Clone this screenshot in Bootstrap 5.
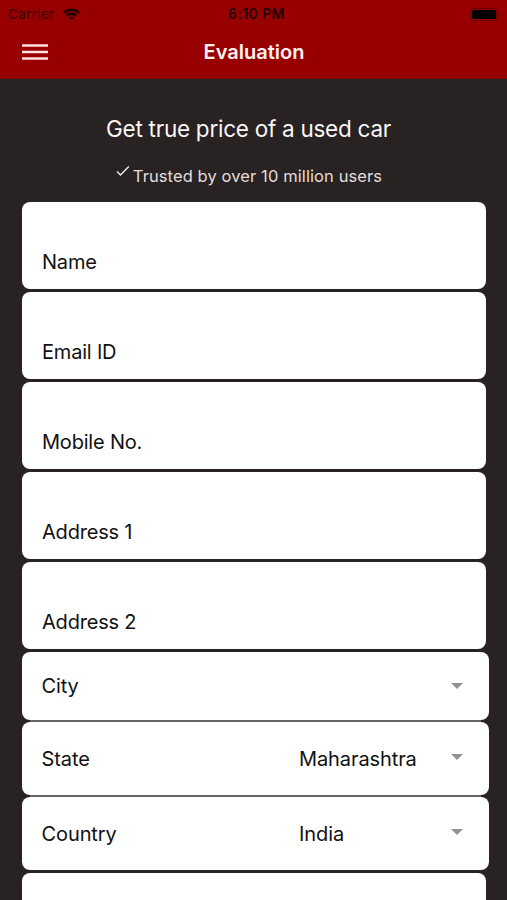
<!DOCTYPE html>
<html lang="en">
<head>
<meta charset="utf-8">
<meta name="viewport" content="width=device-width, initial-scale=1">
<title>Evaluation</title>
<link href="https://cdn.jsdelivr.net/npm/bootstrap@5.3.0/dist/css/bootstrap.min.css" rel="stylesheet">
<style>
  body { background: #282222; font-family: Inter, Roboto, sans-serif; color: #111; height: 900px; overflow: hidden; }
  .top-area { background: #980000; height: 79px; border-bottom: 1px solid #7a0706; }
  .status-line { height: 27px; padding: 0 7px 0 8px; font-size: 13.5px; line-height: 28px; color: #380000; }
  .carrier { letter-spacing: .35px; }
  .status-time { font-weight: 600; color: #250000; font-size: 14px; letter-spacing: .4px; padding-left: 5px; }
  .title-line { height: 50px; padding: 0 22px; }
  .screen-title { font-size: 20px; font-weight: 600; line-height: 50px; color: #fff0f0; padding-left: 1px; }
  .headline { font-size: 22.5px; line-height: 30px; color: #faf6f6; letter-spacing: -.26px; margin-top: 35px; padding-right: 10px; }
  .trust-line { font-size: 16.5px; line-height: 24px; color: #e2dedd; margin-top: 20px; padding-right: 9px; letter-spacing: .1px; }
  .check { margin-right: 3px; margin-top: 1px; }
  .form-area { padding: 0 18px 0 22px; margin-top: 14px; font-size: 20px; line-height: 28px; letter-spacing: -.2px; }
  .field { background: #fff; border-radius: 8px; padding-left: 20px; }
  .field-text { height: 86.5px; width: 464px; margin-bottom: 3.5px; padding-bottom: 12.5px; }
  .field-cut { height: 27px; width: 464px; border-radius: 8px 8px 0 0; margin-top: 3px; }
  .field-pick { width: 467px; padding-right: 26px; }
  .field-pick { padding-left: 19.5px; letter-spacing: -.1px; }
  .pick-city { height: 68px; }
  .pick-tall { height: 73px; }
  .seam { height: 2px; margin: 0 8px; width: 451px; background: #686565; }
  .pick-value { width: 152px; }
  .arrow { width: 0; border: 6px solid transparent; border-top-color: #929292; border-bottom: 0; }
</style>
<script src="https://cdn.jsdelivr.net/npm/bootstrap@5.3.0/dist/js/bootstrap.bundle.min.js"></script>
</head>
<body>
<header class="top-area">
  <div class="status-line row g-0">
    <div class="col d-flex align-items-center gap-2">
      <span class="carrier">Carrier</span>
      <svg width="17" height="13" viewBox="0 0 17 13" fill="none" stroke="#210000" stroke-width="2.6"><path d="M1 4.7C5.2.7 11.8.7 16 4.7M3.8 7.7C6.5 5.2 10.5 5.2 13.2 7.7"/><path d="M8.5 12.2 6 9.7Q8.5 7.8 11 9.7Z" fill="#210000" stroke="none"/></svg>
    </div>
    <div class="col-auto status-time">6:10 PM</div>
    <div class="col d-flex align-items-center justify-content-end">
      <svg width="30" height="13" viewBox="0 0 30 13"><rect x=".5" y=".5" width="26.5" height="12" rx="3" fill="none" stroke="#6a0000"/><rect x="2" y="2" width="24" height="9" rx="1.5" fill="#000"/><path d="M28.3 4.5q2 2 0 4z" fill="#6a0000"/></svg>
    </div>
  </div>
  <div class="title-line row g-0">
    <div class="col d-flex align-items-center">
      <svg width="26" height="16" viewBox="0 0 26 16" stroke="#ffdede" stroke-width="2.3"><path d="M0 1.5h26M0 8h26M0 14.5h26"/></svg>
    </div>
    <h1 class="col-auto screen-title m-0">Evaluation</h1>
    <div class="col"></div>
  </div>
</header>
<main>
  <h2 class="headline text-center fw-normal mb-0">Get true price of a used car</h2>
  <p class="trust-line d-flex justify-content-center mb-0">
    <svg class="check" width="14" height="12" viewBox="0 0 14 12" fill="none" stroke="#eeeaea" stroke-width="1.5"><path d="M1 6.5 4.5 10 12.8 1.5"/></svg>
    <span>Trusted by over 10 million users</span>
  </p>
  <form class="form-area">
    <div class="field field-text d-flex align-items-end">Name</div>
    <div class="field field-text d-flex align-items-end">Email ID</div>
    <div class="field field-text d-flex align-items-end">Mobile No.</div>
    <div class="field field-text d-flex align-items-end">Address 1</div>
    <div class="field field-text d-flex align-items-end">Address 2</div>
    <div class="field field-pick pick-city d-flex align-items-center"><span class="me-auto">City</span><span class="arrow"></span></div>
    <div class="seam"></div>
    <div class="field field-pick pick-tall d-flex align-items-center"><span class="me-auto">State</span><span class="pick-value">Maharashtra</span><span class="arrow mb-1"></span></div>
    <div class="seam"></div>
    <div class="field field-pick pick-tall d-flex align-items-center"><span class="me-auto">Country</span><span class="pick-value">India</span><span class="arrow mb-1"></span></div>
    <div class="field field-cut"></div>
  </form>
</main>
</body>
</html>
